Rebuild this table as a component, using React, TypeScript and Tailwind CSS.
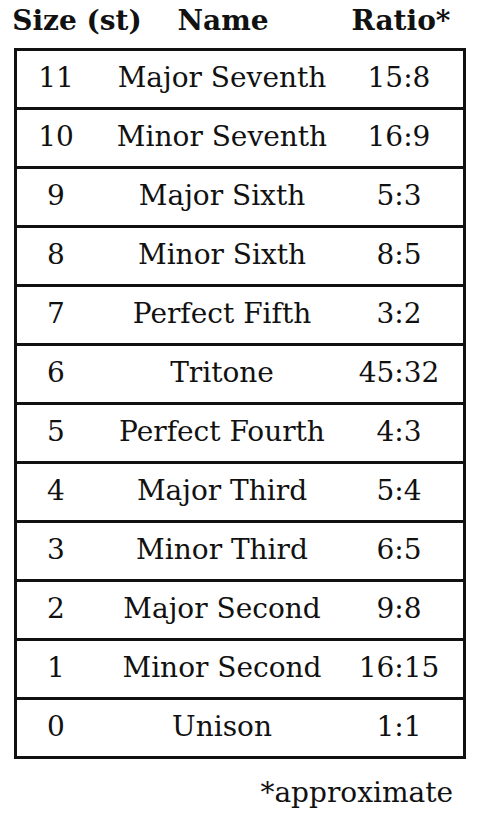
const rows: [string, string, string][] = [
  ["11", "Major Seventh", "15:8"],
  ["10", "Minor Seventh", "16:9"],
  ["9", "Major Sixth", "5:3"],
  ["8", "Minor Sixth", "8:5"],
  ["7", "Perfect Fifth", "3:2"],
  ["6", "Tritone", "45:32"],
  ["5", "Perfect Fourth", "4:3"],
  ["4", "Major Third", "5:4"],
  ["3", "Minor Third", "6:5"],
  ["2", "Major Second", "9:8"],
  ["1", "Minor Second", "16:15"],
  ["0", "Unison", "1:1"],
];

export default function App() {
  return (
    <div className="w-[480px] h-[824px] bg-white text-[#111] font-['DejaVu_Serif'] text-[28px] leading-none">
      {/* column headings */}
      <div className="flex h-[48px] items-end pb-[13px] font-bold whitespace-nowrap">
        <span className="w-[154px] text-center">Size (st)</span>
        <span className="w-[138px] text-center">Name</span>
        <span className="ml-[39px] w-[140px] text-center">Ratio*</span>
      </div>

      {/* intervals */}
      <div className="ml-[14px] w-[452px] border-[3px] border-[#111]">
        {rows.map(([size, name, ratio], i) => (
          <div
            key={size}
            className={`grid grid-cols-[78px_254px_100px] h-[56px] items-center pb-[3px] whitespace-nowrap ${i > 0 ? "border-t-[3px] border-[#111] h-[59px]" : ""}`}
          >
            <span className="text-center">{size}</span>
            <span className="text-center">{name}</span>
            <span className="text-center">{ratio}</span>
          </div>
        ))}
      </div>

      <div className="flex justify-end pr-[27px] pt-[20px]">
        <span>*approximate</span>
      </div>
    </div>
  );
}
